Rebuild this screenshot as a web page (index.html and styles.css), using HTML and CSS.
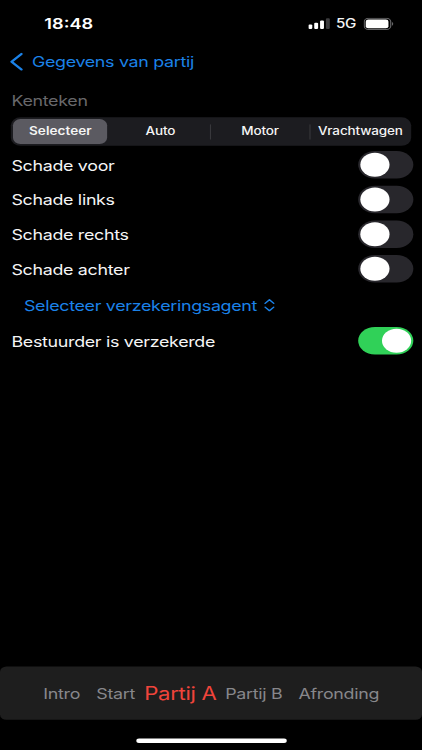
FILE: index.html
```
<!DOCTYPE html>
<html lang="nl">
<head>
<meta charset="utf-8">
<title>Gegevens van partij</title>
<link rel="stylesheet" href="styles.css">
</head>
<body>
<div class="viewport">
<main class="screen">
  <header class="status">
    <span class="time">18:48</span>
    <div class="indicators">
      <svg class="signal" width="20" height="13" viewBox="0 0 20 13"><rect x="0" y="7.6" width="3.6" height="5" rx="1.2"/><rect x="5.4" y="5.5" width="3.6" height="7.1" rx="1.1"/><rect x="10.8" y="3" width="3.6" height="9.6" rx="1.1"/><rect class="dim" x="16.2" y="0.4" width="3.6" height="12.2" rx="1.1"/></svg>
      <span class="network">5G</span>
      <svg class="battery" width="28" height="14" viewBox="0 0 28 14"><rect class="case" x=".6" y=".6" width="24.5" height="12.6" rx="4"/><rect x="2" y="2" width="21" height="9.8" rx="2.4"/><path class="cap" d="M26.3 4.8c1.5.6 1.5 3.6 0 4.2z"/></svg>
    </div>
  </header>
  <nav class="back">
    <svg width="13" height="21" viewBox="0 0 13 21"><path d="M10.8 1.7 1.7 10.4l9.1 8.7"/></svg>
    <span class="back-title">Gegevens van partij</span>
  </nav>
  <div class="field">Kenteken</div>
  <div class="segments">
    <span class="segment selected">Selecteer</span>
    <span class="segment">Auto</span>
    <span class="segment divided">Motor</span>
    <span class="segment divided last">Vrachtwagen</span>
  </div>
  <section class="rows">
    <div class="row"><span>Schade voor</span><i class="toggle"></i></div>
    <div class="row"><span>Schade links</span><i class="toggle"></i></div>
    <div class="row"><span>Schade rechts</span><i class="toggle"></i></div>
    <div class="row"><span>Schade achter</span><i class="toggle"></i></div>
    <div class="picker"><span class="picker-label">Selecteer verzekeringsagent</span><svg width="10" height="15" viewBox="0 0 10 15"><path d="M1 5.4 5 1.4l4 4M1 9.6l4 4 4-4"/></svg></div>
    <div class="row"><span class="insured">Bestuurder is verzekerde</span><i class="toggle on"></i></div>
  </section>
  <footer class="tabs">
    <span class="tab intro">Intro</span>
    <span class="tab start">Start</span>
    <span class="tab active">Partij A</span>
    <span class="tab party">Partij B</span>
    <span class="tab finish">Afronding</span>
  </footer>
  <div class="home"></div>
</main>
</div>
</body>
</html>
```
FILE: styles.css
```
* { box-sizing: border-box; }
body { margin: 0; background: #000; }
.viewport { width: 422px; height: 750px; overflow: hidden; }

.screen {
  width: 390px;
  height: 844px;
  display: flex;
  flex-direction: column;
  transform: scale(1.08205, 0.88863);
  transform-origin: 0 0;
  background: #000;
  color: #f5f5f5;
  font: 400 16.5px/20px Inter, "Liberation Sans", sans-serif;
  letter-spacing: -0.29px;
  white-space: nowrap;
}
.status { height: 53px; padding: 0 26px 0 41px; display: flex; align-items: center; justify-content: space-between; letter-spacing: 0; }
.time { font-size: 16.8px; font-weight: 600; color: #fff; }
.indicators { display: flex; align-items: center; }
.signal { fill: #fff; }
.signal .dim { fill: #3b3b3d; }
.network { margin: 0 7px 0 5.5px; font-size: 14px; font-weight: 500; letter-spacing: -0.3px; }
.battery { fill: #fff; }
.battery .case { fill: none; stroke: #656567; stroke-width: 1.1; }
.battery .cap { fill: #656567; }

.back { height: 32px; padding-left: 9px; display: flex; align-items: center; color: #1b82e8; }
.back svg { fill: none; stroke: currentColor; stroke-width: 2.4; stroke-linecap: round; stroke-linejoin: round; }
.back-title { margin-left: 7.5px; }
.field { height: 47px; padding: 18px 10.6px 0; color: #68686b; }

.segments { height: 32px; margin: 0 10.3px; padding: 2px; display: grid; grid-template-columns: 90px 92px 92px 1fr; border-radius: 9px; background: #1c1c20; }
.segment { position: relative; display: flex; align-items: center; justify-content: center; font-size: 12.5px; font-weight: 500; letter-spacing: -0.15px; }
.selected { border-radius: 7px; background: #5b5a61; font-weight: 600; margin-right: 3px; letter-spacing: 0.05px; }
.last { padding-left: 2px; }
.divided::before { content: ""; position: absolute; left: 0; top: 6px; width: 1px; height: 17px; background: #38383c; }

.rows { padding: 2px 8px 0 10.6px; }
.row { height: 39px; display: flex; align-items: center; justify-content: space-between; }
.toggle { width: 51px; height: 31px; padding: 2px; border-radius: 16px; background: #28272c; }
.toggle::before { content: ""; display: block; width: 27px; height: 27px; border-radius: 50%; background: #fff; }
.toggle.on { background: #30d158; }
.toggle.on::before { margin-left: 20px; }
.picker { height: 42px; padding: 1px 0 0 11.5px; display: flex; align-items: center; gap: 6.5px; color: #1b82e8; }
.picker svg { fill: none; stroke: currentColor; stroke-width: 1.5; stroke-linecap: round; stroke-linejoin: round; }

.tabs { height: 60px; margin-top: auto; padding: 1px 0 0 40px; display: flex; align-items: center; border-radius: 6px; background: #1e1e1e; color: #87878b; }
.start { margin-left: 15px; }
.active { margin-left: 8.5px; font-size: 20.5px; color: #f0443b; }
.party { margin-left: 8px; }
.finish { margin-left: 15px; }
.home { width: 139px; height: 5px; margin: 20.5px 0 8.5px 125.5px; border-radius: 3px; background: #fff; }
```
